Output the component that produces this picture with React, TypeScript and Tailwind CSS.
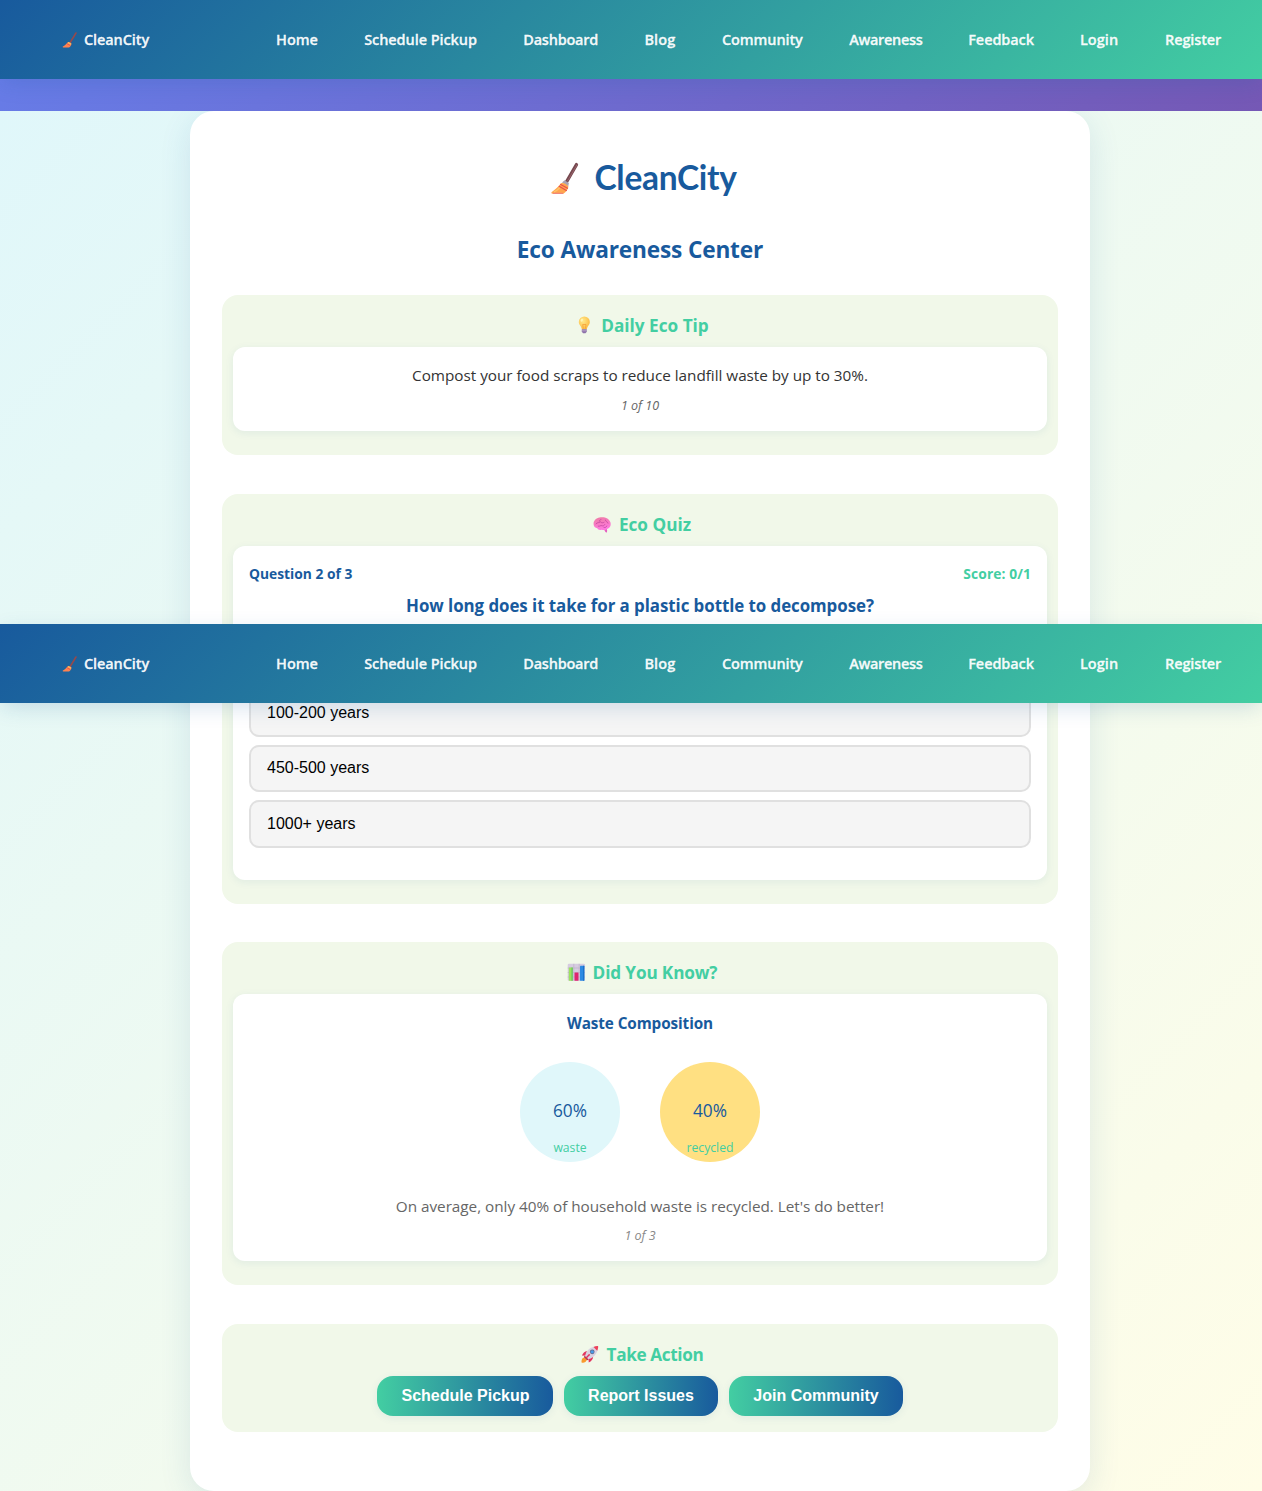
import React from "react";

type IconProps = { className?: string };

function Broom({ className }: IconProps) {
  return (
    <svg viewBox="0 0 32 36" className={className} aria-hidden="true">
      <path d="M26.3 2.6 16 20.5" stroke="#75484f" strokeWidth="3.4" strokeLinecap="round" />
      <path d="M26.8 2.8 17 19.6" stroke="#9a646b" strokeWidth="1" strokeLinecap="round" />
      <path d="m11.4 21.2 2.5-2.3 4.6 2.7-.7 3.4Z" fill="#a9a3b5" />
      <path d="M10 22c2.500-1.200 6.500 1 8 3.300-.3 3-2.400 5.700-5.200 7.300H1.500c-1.200 0-1.500-1-.7-1.700C4.500 28 7.500 25.500 10 22Z" fill="#ffa64f" />
      <path d="M2 32.300h10.500" stroke="#f0837c" strokeWidth="1.200" />
      <path d="M3 30.700c2.500-1 4.500-2.500 6-4.200" stroke="#ffc46b" strokeWidth="1.300" fill="none" />
      <path d="m9.500 22.800 8 4.600M8 24.800l8.300 4.800" stroke="#e94e4b" strokeWidth="1.200" />
    </svg>
  );
}

function SmallBroom({ className }: IconProps) {
  return (
    <svg viewBox="0 0 16 18" className={className} aria-hidden="true">
      <path d="M14 2 8.500 11" stroke="#944a4d" strokeWidth="1.600" strokeLinecap="round" />
      <path d="M5.800 11.200c1.200-.6 3 .3 3.700 1.500-.2 1.600-1 2.800-2.400 3.700H1.200c-.6 0-.7-.5-.3-.8 1.800-1.300 3.300-2.600 4.900-4.400Z" fill="#ff8250" />
      <path d="m6 11.500 3 1.800" stroke="#f7c15c" strokeWidth="1.200" />
      <path d="m5.200 12.800 3 1.700" stroke="#e84d48" strokeWidth=".8" />
    </svg>
  );
}

function Bulb() {
  return (
    <svg viewBox="-1 0 18 18" className="size-[18px]" aria-hidden="true">
      <defs>
        <radialGradient id="bulb" cx=".38" cy=".35" r=".7">
          <stop offset="0" stopColor="#ffe98a" />
          <stop offset="1" stopColor="#fcb83f" />
        </radialGradient>
      </defs>
      <path d="M8.300.4a5.500 5.500 0 0 1 5.500 5.500c0 2.900-2.500 3.900-3 7.300H5.900c-.5-3.400-3.100-4.400-3.100-7.300A5.500 5.500 0 0 1 8.300.4Z" fill="url(#bulb)" />
      <path d="M7.300 12.700 6.700 8.500h3.300l-.6 4.200" stroke="#f39a35" strokeWidth=".7" fill="none" />
      <ellipse cx="5.800" cy="4.100" rx="1.100" ry="1.700" fill="#fff3b5" transform="rotate(30 5.800 4.100)" />
      <path d="M5.800 13.200h5v2.500l-1.300 1.600H7.100l-1.300-1.600Z" fill="#8d72aa" />
      <path d="M5.800 14.800h5" stroke="#c8b5d5" strokeWidth=".7" />
    </svg>
  );
}

function Brain() {
  return (
    <svg viewBox="0 -1 18 18" className="size-[18px]" aria-hidden="true">
      <defs>
        <linearGradient id="brain" x1="0" y1="0" x2=".3" y2="1">
          <stop offset="0" stopColor="#ee7ba1" />
          <stop offset="1" stopColor="#ff7ae0" />
        </linearGradient>
      </defs>
      <path d="M12.300 12.500c1.500.2 2.200 1 1.700 3.400-.1.700-1.200.8-1.500.1l-1.800-3Z" fill="#e45fc0" />
      <path d="M.6 8.300C.2 5 3.300 1.800 6.500 1.500c4.800-1 9.700.8 10.900 4.800 1 3.400-.6 6.200-3.300 6.600-1.500 1.200-4.100 1.600-5.500.8-1.700.5-3.700.2-4.300-1.500C2.100 11.900.7 10.500.6 8.300Z" fill="url(#brain)" />
      <path d="M3 7.800c1.500-2 3.200-.5 4.500-2 .8 1.200 2.500 1.300 3.600.5M5.200 10.200c1.500.6 2.300-1.100 3.700-.5 1.200.5 2.400 0 2.900-1.100M12.400 4.100c0 1.800 2.200 1.200 2.600 3M8 3.500c-1 .2-1.700.8-1.700 1.800M11 11.500c1.400.3 2.400-.3 2.800-1.500" stroke="#c247a0" strokeWidth=".8" fill="none" strokeLinecap="round" />
    </svg>
  );
}

function BarChart() {
  return (
    <svg viewBox="-.5 -.5 18 18" className="size-[18px]" aria-hidden="true">
      <rect x=".2" y=".3" width="17.300" height="17" rx="1.200" fill="#d6cce0" />
      <path d="M.2 4.500h17.300M.2 9h17.300M.2 13.500h17.300M6.300.3v17M11.700.3v17" stroke="#b8adc6" strokeWidth=".6" />
      <rect x="1.300" y="4" width="4" height="13.300" rx=".5" fill="#9ce35e" />
      <path d="M4.600 4v13.300" stroke="#64bd66" strokeWidth="1.200" />
      <rect x="7" y="9" width="4" height="8.300" rx=".5" fill="#df256f" />
      <rect x="12.500" y="2.300" width="4.300" height="15" rx=".5" fill="#2d8ae3" />
      <path d="M16.200 2.300v15" stroke="#1670c8" strokeWidth="1.100" />
    </svg>
  );
}

function Rocket() {
  return (
    <svg viewBox="0 -.5 18 18.500" className="size-[18px]" aria-hidden="true">
      <path d="M4.300 11.200 1.100 13.400c-.8 1.300-.9 2.700-.8 4.200 1.700.1 3-.1 4.200-1l2.100-2.800Z" fill="#f99a2e" />
      <path d="M6.100 5.800C3.500 5.900 1.700 7.700.7 10.300l4.500.3ZM12.200 11.700c0 2.600-1.700 4.600-4.500 5.800l-.3-4.600Z" fill="#e3345f" />
      <path d="M4 10.800c1-5.200 5-9.500 12.500-10.200.7 0 .9.200.9.900C16.700 8.500 12.500 13 7.200 14Z" fill="#d9d2e2" />
      <path d="M12.600 1.500c1.500-.6 2.800-.8 3.900-.9.700 0 .9.200.9.900a17 17 0 0 1-1 3.900Z" fill="#ef4159" />
      <circle cx="11.300" cy="6.500" r="2.400" fill="#6b6782" />
      <circle cx="11.300" cy="6.500" r="1.700" fill="#459be9" />
      <path d="m3.500 10.500 4.100 4-1.400.7-3.400-3.300Z" fill="#a62e5c" />
      <path d="m8.200 9.600-3 3" stroke="#e3345f" strokeWidth="1.500" strokeLinecap="round" />
    </svg>
  );
}

const navItems = [
  { label: "Home", style: "w-[42px]" },
  { label: "Schedule Pickup", style: "w-[113px] tracking-[-0.07px]" },
  { label: "Dashboard", style: "w-[75px] tracking-[-0.22px]" },
  { label: "Blog", style: "w-[31.500px] tracking-[0.12px]" },
  { label: "Community", style: "w-[81px] tracking-[-0.1px]" },
  { label: "Awareness", style: "w-[73px] tracking-[-0.3px]" },
  { label: "Feedback", style: "w-[65.500px] tracking-[-0.1px]" },
  { label: "Login", style: "w-[39px] tracking-[0.05px]" },
  { label: "Register", style: "w-[56px] tracking-[-0.12px]" },
];

function NavBar() {
  return (
    <nav className="flex h-[79px] w-full items-center bg-[linear-gradient(135deg,#185a9d,#43cea2)] pr-[41px] pl-[62px] text-[14.500px] font-semibold whitespace-nowrap text-white/95 shadow-[0_6px_20px_-2px_rgba(24,90,157,0.18)] [-webkit-text-stroke:0.3px]">
      <a className="flex w-[214px] items-center gap-[6px] tracking-[-0.1px]">
        <SmallBroom className="h-[18px] w-4" />
        CleanCity
      </a>
      <div className="flex flex-1 justify-between">
        {navItems.map((n) => (
          <a key={n.label} className={n.style}>{n.label}</a>
        ))}
      </div>
    </nav>
  );
}

type SectionProps = {
  icon: React.ReactNode;
  title: string;
  titleClass?: string;
  className: string;
  children: React.ReactNode;
};

function Section({ icon, title, titleClass = "", className, children }: SectionProps) {
  return (
    <section className={`rounded-2xl bg-[#f1f8e9] px-[11px] pt-4 ${className}`}>
      <h3 className="mb-2 flex h-7 items-center justify-center gap-2 pl-1 text-[17.200px] font-bold text-[#43cea2]">
        {icon}
        <span className={`pt-[2px] ${titleClass}`}>{title}</span>
      </h3>
      {children}
    </section>
  );
}

const panel = "rounded-xl bg-white px-4 text-center shadow-[0_2px_8px_rgba(24,90,157,0.08)]";

const options = ["", "100-200 years", "450-500 years", "1000+ years"];

export default function App() {
  return (
    <div className="relative h-[1491px] w-full overflow-hidden bg-white font-['Open_Sans',sans-serif]">
      <div className="h-[111px] bg-[linear-gradient(135deg,#667eea,#7558b5)]">
        <NavBar />
      </div>

      <main className="h-[1380px] overflow-hidden bg-[linear-gradient(135deg,#e0f7fa,#fffde7)] pl-[190px]">
        <div className="h-[1380px] w-[900px] rounded-3xl bg-white px-8 pt-[43px] shadow-[0_8px_32px_rgba(24,90,157,0.12)]">
          <div className="flex h-12 items-center justify-center gap-[13px] pl-[7px] text-[#185a9d]">
            <Broom className="mt-[2px] h-[35px] w-[31px]" />
            <span className="w-[142px] font-['Comic_Sans_MS','Lato',sans-serif] text-[33.500px] leading-none font-bold tracking-[-0.3px]">CleanCity</span>
          </div>
          <h2 className="mt-[30px] mb-[27px] h-9 text-center text-[22.700px] leading-9 font-bold tracking-[-0.18px] text-[#185a9d]">Eco Awareness Center</h2>

          <Section icon={<Bulb />} title="Daily Eco Tip" className="mb-[39px] h-40">
            <div className={`${panel} h-[84px] pt-[15px]`}>
              <p className="h-[26px] text-[15.300px] leading-[26px] tracking-[-0.03px] text-[#333]">Compost your food scraps to reduce landfill waste by up to 30%.</p>
              <p className="mt-2 text-[12.500px] leading-5 text-[#666] italic">1 of 10</p>
            </div>
          </Section>

          <Section icon={<Brain />} title="Eco Quiz" className="mb-[38px] h-[410px]">
            <div className={`${panel} h-[334px] pt-[18px]`}>
              <div className="flex h-5 items-center justify-between text-[13.800px] font-bold">
                <span className="text-[#185a9d]">Question 2 of 3</span>
                <span className="tracking-[0.1px] text-[#43cea2]">Score: 0/1</span>
              </div>
              <h4 className="mt-2 mb-[14px] h-7 text-[16.900px] leading-7 font-bold tracking-[-0.06px] text-[#185a9d]">How long does it take for a plastic bottle to decompose?</h4>
              <div className="flex flex-col gap-2">
                {options.map((o, i) => (
                  <button key={i} className="flex h-[47.400px] items-center rounded-[10px] border-2 border-[#e0e0e0] bg-[#f5f5f5] px-4 text-left font-['Liberation_Sans',Arial,sans-serif] text-base text-black">{o}</button>
                ))}
              </div>
            </div>
          </Section>

          <Section icon={<BarChart />} title="Did You Know?" titleClass="tracking-[-0.14px]" className="mb-[39px] h-[343px]">
            <div className={`${panel} h-[267px] pt-[17px]`}>
              <h4 className="h-6 text-[15.300px] leading-6 font-bold tracking-[-0.1px] text-[#185a9d]">Waste Composition</h4>
              <div className="mt-[27px] flex justify-center gap-10">
                <div className="flex size-[100px] flex-col items-center rounded-full bg-[#e0f7fa] pt-[35px]">
                  <span className="text-[17.300px] leading-7 text-[#185a9d]">60%</span>
                  <span className="mt-[13px] text-[12.200px] leading-5 text-[#43cea2]">waste</span>
                </div>
                <div className="flex size-[100px] flex-col items-center rounded-full bg-[#ffe082] pt-[35px]">
                  <span className="text-[17.300px] leading-7 text-[#185a9d]">40%</span>
                  <span className="mt-[13px] text-[12.200px] leading-5 text-[#43cea2]">recycled</span>
                </div>
              </div>
              <p className="mt-8 h-6 text-[15.300px] leading-6 tracking-[-0.03px] text-[#666]">On average, only 40% of household waste is recycled. Let's do better!</p>
              <p className="mt-2 text-[12.500px] leading-5 text-[#888] italic">1 of 3</p>
            </div>
          </Section>

          <Section icon={<Rocket />} title="Take Action" titleClass="tracking-[-0.38px]" className="h-[108px]">
            <div className="flex justify-center gap-[11px] font-['Liberation_Sans',Arial,sans-serif] text-base font-bold text-white">
              <button className="h-10 w-[176px] rounded-2xl bg-[linear-gradient(90deg,#43cea2,#185a9d)] pl-px shadow-[0_2px_8px_rgba(24,90,157,0.08)]">Schedule Pickup</button>
              <button className="h-10 w-[154px] rounded-2xl bg-[linear-gradient(90deg,#43cea2,#185a9d)] shadow-[0_2px_8px_rgba(24,90,157,0.08)]">Report Issues</button>
              <button className="h-10 w-[174px] rounded-2xl bg-[linear-gradient(90deg,#43cea2,#185a9d)] shadow-[0_2px_8px_rgba(24,90,157,0.08)]">Join Community</button>
            </div>
          </Section>
        </div>
      </main>

      <div className="absolute inset-x-0 top-[624px]">
        <NavBar />
      </div>
    </div>
  );
}
